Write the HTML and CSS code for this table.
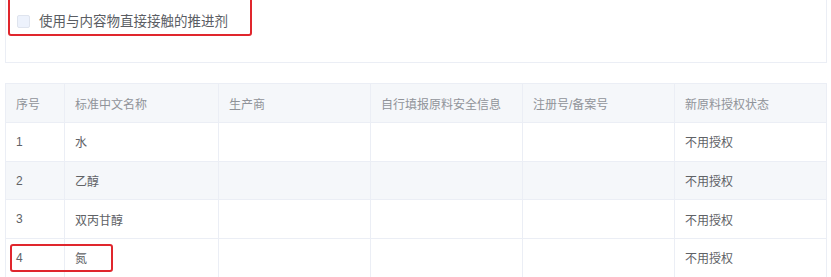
FILE: index.html
```html
<!DOCTYPE html>
<html lang="zh-CN">
<head>
<meta charset="utf-8">
<title>推进剂</title>
<link rel="stylesheet" href="styles.css">
</head>
<body>
<div class="page">
  <div class="card">
    <label class="check">
      <span class="box"></span>
      <span class="check-text">使用与内容物直接接触的推进剂</span>
    </label>
  </div>
  <table class="grid">
    <colgroup>
      <col class="c1"><col class="c2"><col class="c3"><col class="c4"><col class="c5"><col class="c6">
    </colgroup>
    <thead>
      <tr><th>序号</th><th>标准中文名称</th><th>生产商</th><th>自行填报原料安全信息</th><th>注册号/备案号</th><th>新原料授权状态</th></tr>
    </thead>
    <tbody>
      <tr><td>1</td><td>水</td><td></td><td></td><td></td><td>不用授权</td></tr>
      <tr class="striped"><td>2</td><td>乙醇</td><td></td><td></td><td></td><td>不用授权</td></tr>
      <tr><td>3</td><td>双丙甘醇</td><td></td><td></td><td></td><td>不用授权</td></tr>
      <tr><td>4</td><td>氮</td><td></td><td></td><td></td><td>不用授权</td></tr>
    </tbody>
  </table>
  <div class="mark mark-top"></div>
  <div class="mark mark-row"></div>
</div>
</body>
</html>
```

FILE: styles.css
```css
html, body {
  margin: 0;
  padding: 0;
  background: #ffffff;
}

body {
  font-family: "Liberation Sans", "Noto Sans CJK SC", sans-serif;
  color: #606266;
}

.page {
  position: relative;
  padding: 0 5px;
  overflow: hidden;
  height: 277px;
}

.card {
  border: 1px solid #ebeef5;
  border-top: none;
  height: 63px;
  box-sizing: border-box;
  padding: 14px 0 0 11px;
  width: 822px;
}

.check {
  display: flex;
  align-items: center;
  gap: 9px;
  height: 14px;
}

.box {
  width: 13px;
  height: 13px;
  box-sizing: border-box;
  border: 1px solid #dfe4ee;
  border-radius: 2px;
  background: #edf2fc;
}

.check-text {
  font-size: 13.5px;
  line-height: 14px;
  color: #5a5d63;
  padding-top: 2px;
}

.grid {
  margin-top: 20px;
  border-collapse: collapse;
  table-layout: fixed;
  width: 821px;
  font-size: 12px;
}

.c1 { width: 59px; }
.c2 { width: 154px; }
.c3 { width: 152px; }
.c4 { width: 152px; }
.c5 { width: 152px; }
.c6 { width: 152px; }

.grid th,
.grid td {
  border: 1px solid #ebeef5;
  padding: 0 10px;
  text-align: left;
  vertical-align: middle;
  white-space: nowrap;
}

.grid th {
  height: 38px;
  background: #f5f7fa;
  color: #909399;
  font-weight: normal;
}

.grid td {
  height: 37.7px;
  color: #606266;
}

.grid tr.striped td {
  background: #f5f7fa;
}

.mark {
  position: absolute;
  border: 2px solid #e0262d;
  border-radius: 3px;
  box-sizing: border-box;
}

.mark-top {
  left: 8px;
  top: -3px;
  width: 244px;
  height: 39px;
}

.mark-row {
  left: 10px;
  top: 244px;
  width: 103px;
  height: 28px;
}
```
